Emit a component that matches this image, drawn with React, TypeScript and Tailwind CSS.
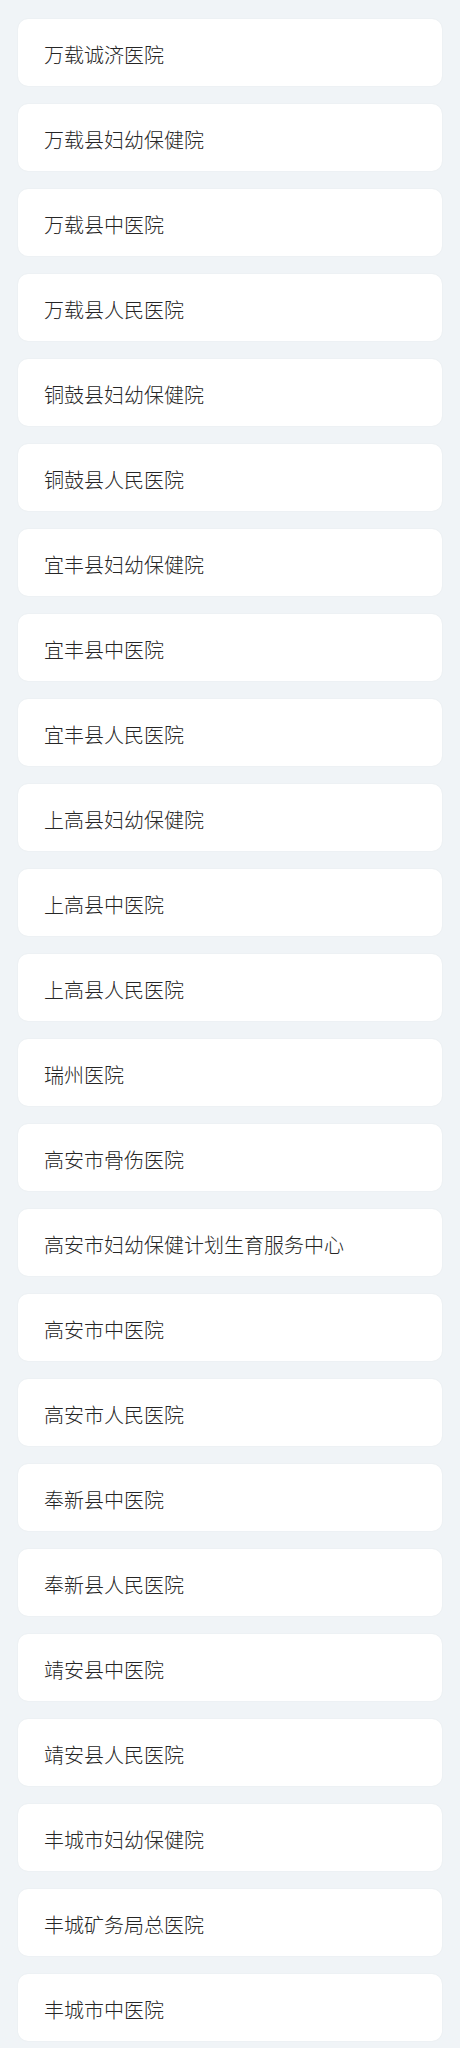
import React from 'react';

const hospitals: string[] = [
  '万载诚济医院',
  '万载县妇幼保健院',
  '万载县中医院',
  '万载县人民医院',
  '铜鼓县妇幼保健院',
  '铜鼓县人民医院',
  '宜丰县妇幼保健院',
  '宜丰县中医院',
  '宜丰县人民医院',
  '上高县妇幼保健院',
  '上高县中医院',
  '上高县人民医院',
  '瑞州医院',
  '高安市骨伤医院',
  '高安市妇幼保健计划生育服务中心',
  '高安市中医院',
  '高安市人民医院',
  '奉新县中医院',
  '奉新县人民医院',
  '靖安县中医院',
  '靖安县人民医院',
  '丰城市妇幼保健院',
  '丰城矿务局总医院',
  '丰城市中医院',
];

export default function App() {
  return (
    <div
      className="min-h-screen w-[460px] bg-[#f0f4f7] px-[18px] pt-[19px] pb-[8px]"
      style={{ fontFamily: '"Noto Sans CJK SC", "Noto Sans", sans-serif' }}
    >
      <ul className="flex flex-col gap-[18px]">
        {hospitals.map((name) => (
          <li
            key={name}
            className="flex h-[67px] items-center rounded-[10px] bg-white pl-[26px] pt-[4px] text-[20px] font-light text-[#262626] shadow-[0_0_2px_rgba(0,0,0,0.06)]"
          >
            {name}
          </li>
        ))}
      </ul>
    </div>
  );
}
